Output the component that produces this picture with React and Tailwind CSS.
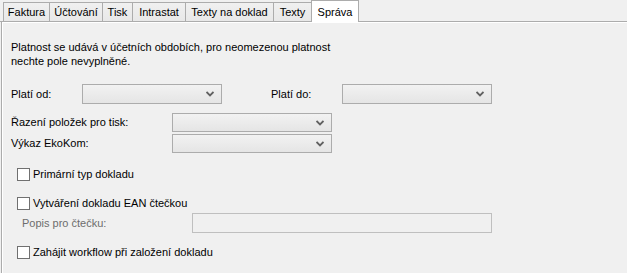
import { useState } from 'react'

const tabs = [
  { label: 'Faktura', w: 'w-[47px]' },
  { label: 'Účtování', w: 'w-[54px]' },
  { label: 'Tisk', w: 'w-[31px]' },
  { label: 'Intrastat', w: 'w-[54px]' },
  { label: 'Texty na doklad', w: 'w-[89px]' },
  { label: 'Texty', w: 'w-[39px]' },
  { label: 'Správa', w: 'w-[48px]' },
]

function Chevron() {
  return (
    <svg width="8" height="6" viewBox="0 0 8 6" className="shrink-0">
      <path d="M0.5 1 L4 4.5 L7.5 1" fill="none" stroke="#606060" strokeWidth="1.8" />
    </svg>
  )
}

function Combo({ className }) {
  return (
    <div
      className={
        'flex items-center justify-end pr-[7px] border border-[#acacac] bg-gradient-to-b from-[#f2f2f2] to-[#e5e5e5] ' +
        className
      }
    >
      <Chevron />
    </div>
  )
}

function Check({ label }) {
  const [on, setOn] = useState(false)
  return (
    <label className="flex items-center h-[13px] ml-[14px] cursor-default" onClick={() => setOn(!on)}>
      <span className="w-[13px] h-[13px] border border-[#707070] bg-white shrink-0" />
      <span className="ml-[3px] leading-none">{label}</span>
    </label>
  )
}

export default function App() {
  const active = 'Správa'
  return (
    <div
      className="w-[627px] h-[273px] overflow-hidden bg-[#f0f0f0] text-[11px] text-black"
      style={{ fontFamily: '"Liberation Sans", Arial, sans-serif' }}
    >
      {/* Tab strip */}
      <div className="flex items-end h-[22px] pl-[3px] border-b border-[#acacac]">
        {tabs.map(({ label, w }) =>
          label === active ? (
            <div
              key={label}
              className={`${w} h-[22px] -mb-px -ml-px relative z-10 flex items-start justify-center pt-[3px] bg-white border border-b-0 border-[#acacac]`}
            >
              {label}
            </div>
          ) : (
            <div
              key={label}
              className={`${w} h-[19px] -ml-px first:ml-0 flex items-center justify-center bg-gradient-to-b from-[#f0f0f0] to-[#e8e8e8] border border-b-0 border-[#acacac]`}
            >
              {label}
            </div>
          )
        )}
      </div>

      {/* Panel */}
      <div className="h-full ml-[1px] border-l border-[#acacac] flex flex-col">
        <div className="h-full border-l border-t border-white flex flex-col">
          <p className="mt-[17px] ml-[8px] leading-[14px]">
            Platnost se udává v účetních obdobích, pro neomezenou platnost
            <br />
            nechte pole nevyplněné.
          </p>

          <div className="mt-[16px] flex items-center h-[20px]">
            <span className="ml-[8px] w-[71px]">Platí od:</span>
            <Combo className="w-[140px] h-[20px]" />
            <span className="ml-[49px] w-[71px]">Platí do:</span>
            <Combo className="w-[150px] h-[20px]" />
          </div>

          <div className="mt-[9px] flex items-center h-[19px]">
            <span className="ml-[8px] w-[161px]">Řazení položek pro tisk:</span>
            <Combo className="w-[160px] h-[19px]" />
          </div>
          <div className="mt-[2px] flex items-center h-[19px]">
            <span className="ml-[8px] w-[161px]">Výkaz EkoKom:</span>
            <Combo className="w-[160px] h-[19px]" />
          </div>

          <div className="mt-[15px]">
            <Check label="Primární typ dokladu" />
          </div>
          <div className="mt-[16px]">
            <Check label="Vytváření dokladu EAN čtečkou" />
          </div>
          <div className="mt-[3px] flex items-center h-[20px]">
            <span className="ml-[19px] w-[170px] text-[#6d6d6d]">Popis pro čtečku:</span>
            <div className="w-[300px] h-[20px] border border-[#bfbfbf] bg-[#f0f0f0]" />
          </div>
          <div className="mt-[13px]">
            <Check label="Zahájit workflow při založení dokladu" />
          </div>
        </div>
      </div>
    </div>
  )
}
